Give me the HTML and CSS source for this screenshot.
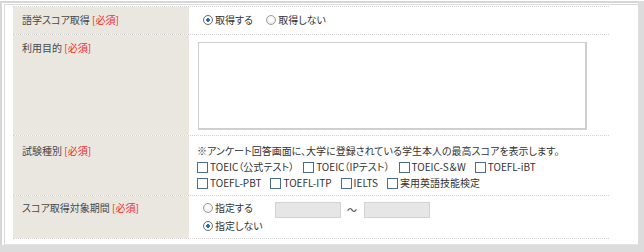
FILE: index.html
```html
<!DOCTYPE html>
<html lang="ja">
<head>
  <meta charset="UTF-8">
  <meta name="viewport" content="width=device-width,initial-scale=1">
  <title>語学スコア設定</title>
  <link rel="stylesheet" href="styles.css">
</head>
<body>
  <div class="page">
    <div class="frame">
      <div class="inner">
        <form class="form">
          <div class="row row-score">
            <div class="label">語学スコア取得 <span class="req">[必須]</span></div>
            <div class="value">
              <label class="opt"><input type="radio" name="score" checked>取得する</label>
              <label class="opt"><input type="radio" name="score">取得しない</label>
            </div>
          </div>
          <div class="row row-purpose">
            <div class="label">利用目的 <span class="req">[必須]</span></div>
            <div class="value">
              <textarea class="purpose" name="purpose"></textarea>
            </div>
          </div>
          <div class="row row-exam">
            <div class="label">試験種別 <span class="req">[必須]</span></div>
            <div class="value">
              <p class="note">※アンケート回答画面に、大学に登録されている学生本人の最高スコアを表示します。</p>
              <div class="checks">
                <label class="chk"><input type="checkbox">TOEIC（公式テスト）</label>
                <label class="chk"><input type="checkbox">TOEIC（IPテスト）</label>
                <label class="chk"><input type="checkbox">TOEIC-S＆W</label>
                <label class="chk"><input type="checkbox">TOEFL-iBT</label>
              </div>
              <div class="checks">
                <label class="chk"><input type="checkbox">TOEFL-PBT</label>
                <label class="chk"><input type="checkbox">TOEFL-ITP</label>
                <label class="chk"><input type="checkbox">IELTS</label>
                <label class="chk"><input type="checkbox">実用英語技能検定</label>
              </div>
            </div>
          </div>
          <div class="row row-period">
            <div class="label">スコア取得対象期間 <span class="req">[必須]</span></div>
            <div class="value">
              <div class="period">
                <label class="opt"><input type="radio" name="period">指定する</label>
                <input type="text" class="date from" disabled>
                <span class="tilde">～</span>
                <input type="text" class="date" disabled>
              </div>
              <label class="opt"><input type="radio" name="period" checked>指定しない</label>
            </div>
          </div>
        </form>
      </div>
    </div>
  </div>
</body>
</html>
```

FILE: styles.css
```css
body { margin: 0; background: #fff; font-family: "Noto Sans CJK JP", sans-serif; font-size: 10px; color: #444; font-feature-settings: "palt"; }
.page { width: 644px; height: 251px; margin-top: 1px; box-sizing: border-box; background: #dcdcdc; padding: 0 6px 7px 0; }
.frame { height: 100%; box-sizing: border-box; background: #fff; border-top: 2px solid #d6d6d6; border-left: 2px solid #d6d6d6; padding: 1px 0 0 2px; }
.inner { height: 100%; box-sizing: border-box; border-top: 1px solid #dadada; border-left: 1px solid #dadada; border-bottom: 1px solid #e4e4e4; padding: 1px 29px 0 8px; }

.row { display: grid; grid-template-columns: 176px 1fr; border-top: 1px dotted #d2d2d2; line-height: 16px; }
.row:last-child { border-bottom: 1px dotted #d2d2d2; }
.label { background: #eae7e1; padding-left: 9px; color: #474747; }
.req { color: #ee2a2a; }
.value { padding-left: 8px; color: #333; }

.row-score .label, .row-score .value { padding-top: 5px; padding-bottom: 5px; }
.row-purpose .label { padding-top: 5px; }
.row-purpose .value { padding-top: 7px; padding-bottom: 5px; }
.row-exam .label, .row-exam .value { padding-top: 7px; padding-bottom: 4px; }
.row-period .label, .row-period .value { padding-top: 4px; padding-bottom: 3px; }

.opt { display: inline-flex; align-items: center; margin-right: 5px; }
.opt input { appearance: none; width: 10px; height: 10px; margin: 0 2px 0 6px; border-radius: 50%; border: 1px solid #9c9c9c; background: radial-gradient(circle at 50% 40%, #fff 20%, #e2e2e2 90%); box-sizing: border-box; }
.opt input:checked { border-color: #6b6b6b; background: radial-gradient(circle, #1c64b4 0, #2a73c2 28%, #fff 36%, #fff 60%, #d8d8d8 100%); }

.purpose { display: block; width: 389px; height: 88px; margin: 0 0 0 1px; box-sizing: border-box; border: 1px solid #cfcfcf; border-right-width: 2px; border-bottom-width: 2px; resize: none; }

.note { margin: 0; }
.checks { display: flex; gap: 9px; }
.chk { display: inline-flex; align-items: center; gap: 2px; }
.chk input { appearance: none; width: 11px; height: 11px; margin: 0; border: 1px solid #4c6c8c; background: #fff; box-sizing: border-box; }

.period { display: flex; align-items: flex-start; }
.period .opt { margin-right: 0; }
.date { width: 66px; height: 16px; margin: 2px 0 0; box-sizing: border-box; border: 1px solid #d2d2d2; background: #e6e6e6; }
.date.from { margin-left: 22px; }
.tilde { margin: 2px 7px 0 6px; }
```
